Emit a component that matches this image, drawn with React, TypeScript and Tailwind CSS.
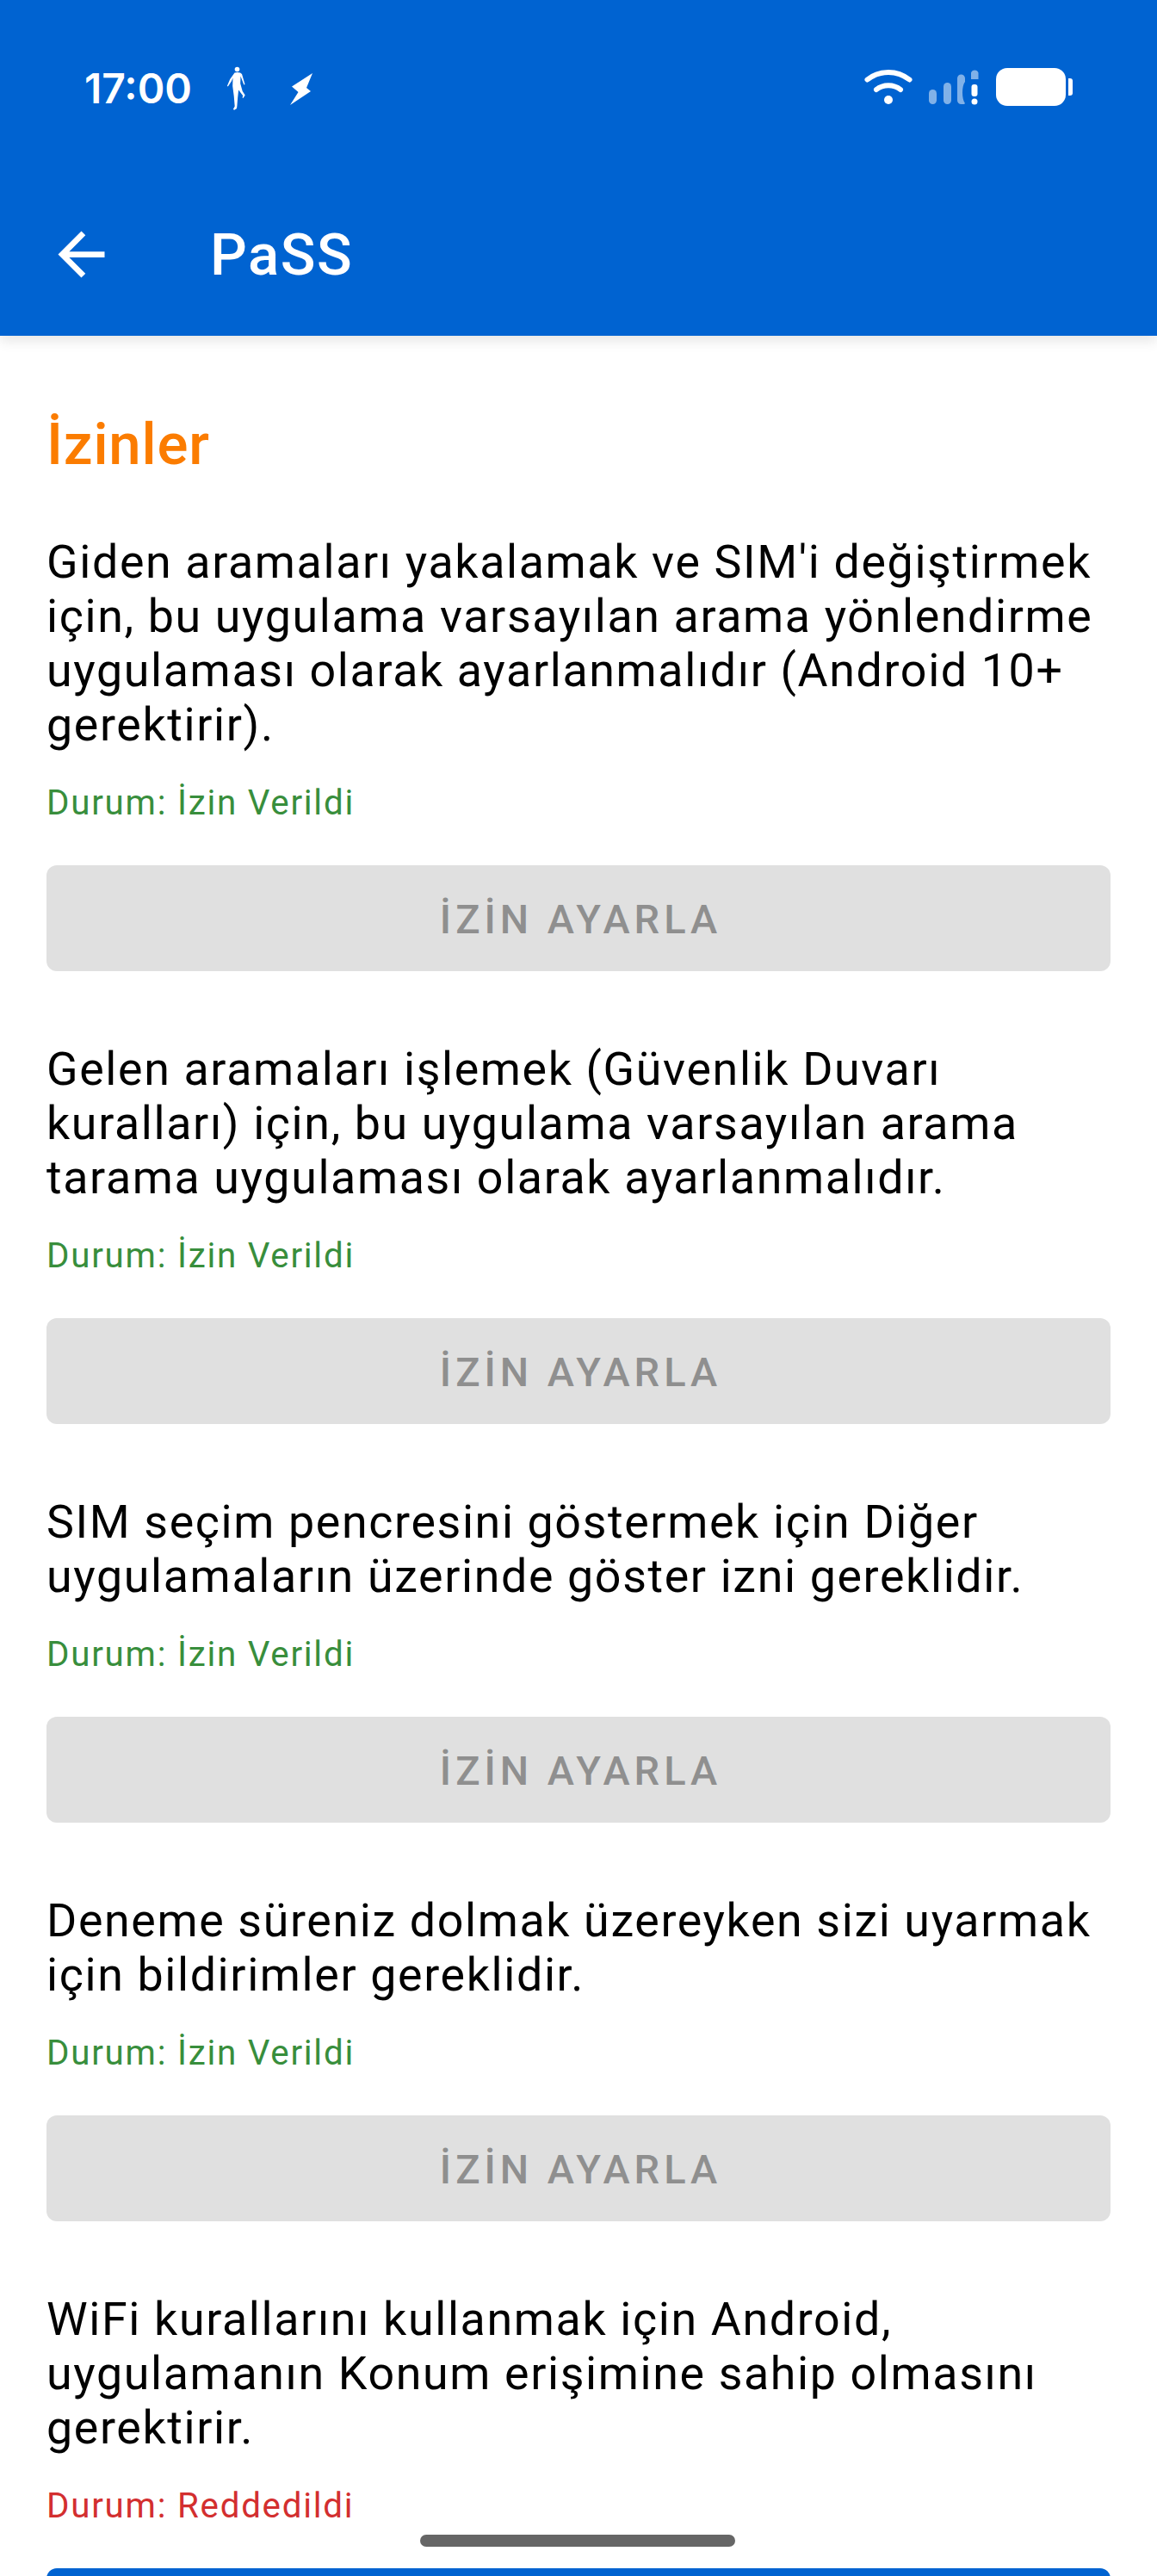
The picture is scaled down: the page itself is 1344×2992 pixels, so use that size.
const sections = [
  {
    lines: ["Giden aramaları yakalamak ve SIM'i değiştirmek", 'için, bu uygulama varsayılan arama yönlendirme', 'uygulaması olarak ayarlanmalıdır (Android 10+', 'gerektirir).'],
    granted: true,
  },
  {
    lines: ['Gelen aramaları işlemek (Güvenlik Duvarı', 'kuralları) için, bu uygulama varsayılan arama', 'tarama uygulaması olarak ayarlanmalıdır.'],
    granted: true,
  },
  {
    lines: ['SIM seçim pencresini göstermek için Diğer', 'uygulamaların üzerinde göster izni gereklidir.'],
    granted: true,
  },
  {
    lines: ['Deneme süreniz dolmak üzereyken sizi uyarmak', 'için bildirimler gereklidir.'],
    granted: true,
  },
  {
    lines: ['WiFi kurallarını kullanmak için Android,', 'uygulamanın Konum erişimine sahip olmasını', 'gerektirir.'],
    granted: false,
  },
];

function BackIcon() {
  return (
    <svg width="81" height="81" viewBox="0 0 24 24" fill="white">
      <path d="M20 11H7.830l5.590-5.590L12 4l-8 8 8 8 1.410-1.410L7.830 13H20v-2z" />
    </svg>
  );
}

function WalkIcon() {
  return (
    <svg width="24" height="52" viewBox="0 0 24 52" fill="white">
      <circle cx="12.500" cy="3.500" r="2.800" />
      <path d="M9.500 7.500c2-.8 4.500-.8 6.500 0l2 1.500 3.500 12-1.200.5-3.800-10-.3 8.500 2.500 9 3 4.500-2.200 3.500-.9-.6.5-2.300-5-6.500-1 9.500-.7 9-.4 3-2.800 1.600-1.400-.8 1.900-3.300-1-12-1.500-11.500.3-9.500-1.700 3.800-4 6.200-.9-.8 3.300-7.700z" />
    </svg>
  );
}

function BoltIcon() {
  return (
    <svg width="26" height="37" viewBox="0 0 26 37" fill="white">
      <path d="M26 0 19 17 24 21 0 37 9.500 22 2 15.500z" />
    </svg>
  );
}

function WifiIcon() {
  return (
    <svg width="56" height="42" viewBox="0 0 56 42" fill="none" stroke="white" strokeLinecap="round">
      <path d="M3.500 12.500C18 1 38 1 52.500 12.500" strokeWidth="6" />
      <path d="M14 24C22 17.500 34 17.500 42 24" strokeWidth="6" />
      <circle cx="28" cy="36" r="5" fill="white" stroke="none" />
    </svg>
  );
}

function SignalIcon() {
  return (
    <svg width="58" height="42" viewBox="0 0 58 42">
      <rect x="0" y="24" width="9" height="17" rx="4.500" fill="white" fillOpacity="0.5" />
      <rect x="17" y="16" width="9" height="25" rx="4.500" fill="white" fillOpacity="0.5" />
      <path d="M33 11a4.500 4.500 0 0 1 9 0v4c-4 5-4 20 0 25l-1 1h-3.500a4.500 4.500 0 0 1-4.500-4.500z" fill="white" fillOpacity="0.5" />
      <path d="M49 4.500a4.500 4.500 0 0 1 8.500 0V12H49z" fill="white" fillOpacity="0.5" />
      <rect x="49.500" y="18" width="7" height="14" rx="3" fill="white" />
      <circle cx="53" cy="38" r="3.500" fill="white" />
    </svg>
  );
}

function BatteryIcon() {
  return (
    <div className="flex items-center gap-[3px]">
      <div className="h-[44px] w-[81px] rounded-[13px] bg-white" />
      <div className="h-[20px] w-[5px] rounded-r-[3px] bg-white" />
    </div>
  );
}

function PermissionBlock({ lines, granted }: { lines: string[]; granted: boolean }) {
  return (
    <section>
      <p className="text-[53.760px] leading-[63px] tracking-[1.630px] text-black">
        {lines.map((line, i) => (
          <span key={i} className="block whitespace-nowrap">{line}</span>
        ))}
      </p>
      <p className={`mt-[32px] text-[40.320px] leading-[56px] tracking-[1.750px] ${granted ? 'text-[#388e3c]' : 'text-[#d32f2f]'}`}>
        Durum: {granted ? 'İzin Verildi' : 'Reddedildi'}
      </p>
      <button
        className={`mt-[44px] flex h-[123px] w-full items-center justify-center rounded-[12px] pl-[5px] pt-[3px] text-[47px] font-medium tracking-[5px] ${
          granted ? 'bg-[#e0e0e0] text-[#8f8f8f]' : 'bg-[#0063d1] text-white'
        }`}
      >
        İZİN AYARLA
      </button>
    </section>
  );
}

export default function App() {
  return (
    <div className="relative h-[2992px] w-[1344px] overflow-hidden bg-white font-['Roboto',sans-serif]">
      <header className="relative z-10 h-[390px] bg-[#0063d1] text-white shadow-[0_6px_14px_rgba(0,0,0,0.1)]">
        <div className="flex h-[200px] items-start justify-between pl-[98px] pr-[98px] pt-[77px]">
          <div className="flex items-center">
            <span className="w-[122px] font-['Inter',sans-serif] text-[48px] font-semibold leading-[52px]">17:00</span>
            <span className="ml-[43px] flex"><WalkIcon /></span>
            <span className="ml-[50px] flex"><BoltIcon /></span>
          </div>
          <div className="mt-[2px] flex items-center">
            <WifiIcon />
            <span className="ml-[19px] flex"><SignalIcon /></span>
            <span className="ml-[20px] flex"><BatteryIcon /></span>
          </div>
        </div>
        <div className="flex h-[190px] items-center pl-[54px]">
          <BackIcon />
          <h1 className="ml-[109px] pt-[2px] text-[67.200px] font-medium leading-[80px] tracking-[1.500px]">PaSS</h1>
        </div>
      </header>

      <main className="flex flex-col gap-[82px] px-[54px] pt-[86px]">
        <div className="flex flex-col gap-[65px]">
          <h2 className="text-[67.200px] font-medium leading-[80px] tracking-[0.800px] text-[#fb7c00]">İzinler</h2>
          <PermissionBlock lines={sections[0].lines} granted={sections[0].granted} />
        </div>
        {sections.slice(1).map((s, i) => (
          <PermissionBlock key={i} lines={s.lines} granted={s.granted} />
        ))}
      </main>

      <div className="absolute left-[488px] top-[2944px] h-[14px] w-[366px] rounded-full bg-[#666666]" />
    </div>
  );
}
